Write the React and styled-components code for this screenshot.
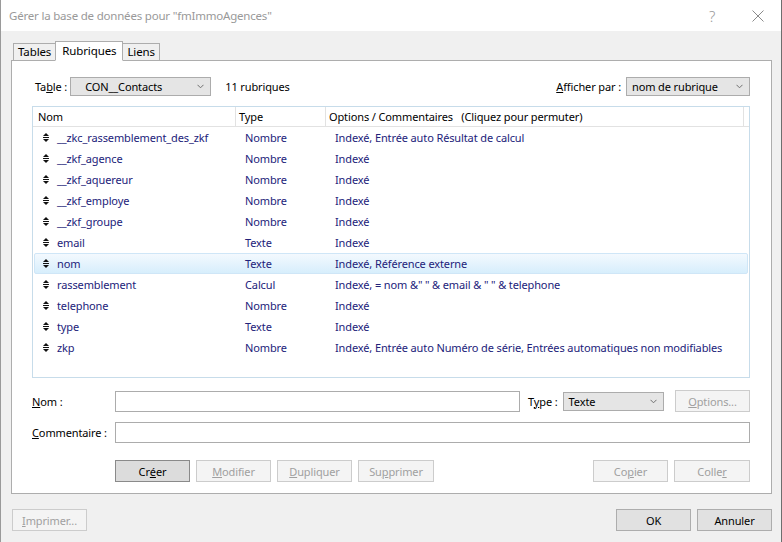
import React from "react";
import styled, { createGlobalStyle, css } from "styled-components";

const Global = createGlobalStyle`
  html, body { margin: 0; padding: 0; background: #f0f0f0; }
  body { font-family: "Noto Sans", "Open Sans", sans-serif; font-size: 11px; letter-spacing: -0.12px; color: #000; }
  * { box-sizing: border-box; }
`;

const Window = styled.div`
  width: 782px;
  height: 542px;
  display: flex;
  flex-direction: column;
  background: #f0f0f0;
  border-left: 1px solid #9a9a9a;
  border-right: 1px solid #6e6e6e;
  overflow: hidden;
`;

const TitleBar = styled.div`
  height: 31px;
  flex: none;
  background: #fff;
  display: flex;
  align-items: center;
  padding-left: 8px;
  color: #999;
  font-size: 11.5px;
  letter-spacing: -0.2px;
`;

const TitleText = styled.div`
  flex: 1;
`;

const TitleBtn = styled.div`
  width: 46px;
  display: flex;
  justify-content: center;
  align-items: center;
  color: #9a9a9a;
  font-size: 15px;
  font-weight: 300;
`;

const Body = styled.div`
  flex: 1;
  display: flex;
  flex-direction: column;
  padding: 10px 9px 0 10px;
`;

const TabStrip = styled.div`
  display: flex;
  align-items: flex-end;
  height: 19px;
  padding-left: 2px;
  position: relative;
  z-index: 1;
`;

const Tab = styled.div`
  height: ${(p) => (p.$active ? 20 : 17)}px;
  padding: 0 ${(p) => (p.$active ? 6 : 4)}px;
  margin: 0 ${(p) => (p.$active ? -1 : 0)}px;
  border: 1px solid #adadad;
  border-bottom: ${(p) => (p.$active ? "1px solid #fff" : "none")};
  background: ${(p) => (p.$active ? "#fff" : "#f0f0f0")};
  display: flex;
  align-items: center;
  font-size: 11.5px;
  line-height: 1;
  margin-bottom: ${(p) => (p.$active ? -1 : 0)}px;
  z-index: ${(p) => (p.$active ? 2 : 1)};
`;

const Panel = styled.div`
  height: 434px;
  background: #fff;
  border: 1px solid #adadad;
  padding: 16px 21px 0 20px;
  display: flex;
  flex-direction: column;
`;

const TopRow = styled.div`
  display: flex;
  align-items: center;
  height: 19px;
  padding-left: 3px;
  margin-bottom: 10px;
`;

const Label = styled.span`
  white-space: nowrap;
  margin-right: ${(p) => p.$mr || 0}px;
  margin-left: ${(p) => p.$ml || 0}px;
`;

const Select = styled.div`
  width: ${(p) => p.$w}px;
  height: ${(p) => p.$h || 19}px;
  border: 1px solid #acacac;
  background: #e5e5e5;
  display: flex;
  align-items: center;
  padding-left: ${(p) => p.$pl || 5}px;
  padding-right: 6px;
  justify-content: space-between;
  flex: none;
`;

const Chevron = () => (
  <svg width="7" height="5" viewBox="0 0 7 5">
    <path d="M0.5 0.8 L3.5 3.8 L6.5 0.8" fill="none" stroke="#707070" strokeWidth="1" />
  </svg>
);

const CloseIcon = () => (
  <svg width="12" height="12" viewBox="0 0 12 12">
    <path d="M0.5 0.5 L11.5 11.5 M11.5 0.5 L0.5 11.5" fill="none" stroke="#8a8a8a" strokeWidth="1" />
  </svg>
);

const Count = styled.span`
  margin-left: 14px;
  flex: 1;
`;

const ListBox = styled.div`
  height: 272px;
  border: 1px solid #c7dcea;
  display: flex;
  flex-direction: column;
`;

const HeaderRow = styled.div`
  display: grid;
  grid-template-columns: 203px 90px 418px 1fr;
  height: 20px;
  flex: none;
  border-bottom: 1px solid #e2e2e2;
`;

const HeaderCell = styled.div`
  padding-left: ${(p) => p.$pl ?? 3}px;
  display: flex;
  align-items: center;
  border-right: 1px solid #e2e2e2;
  &:last-child { border-right: none; }
  white-space: pre;
`;

const Row = styled.div`
  display: grid;
  grid-template-columns: 203px 90px 1fr;
  height: 21px;
  flex: none;
  align-items: center;
  color: #22227a;
  margin: 0 1px;
  border: 1px solid transparent;
  border-radius: 2px;
  ${(p) =>
    p.$sel &&
    css`
      background: linear-gradient(#f3f9fe, #d7eefc);
      border-color: #cfe6f7;
    `}
`;

const NameCell = styled.div`
  display: flex;
  align-items: center;
  padding-left: 8px;
  white-space: nowrap;
`;

const Handle = styled.span`
  width: 14px;
  display: inline-flex;
`;

const Cell = styled.div`
  padding-left: ${(p) => p.$pl}px;
  white-space: nowrap;
`;

const FormRow = styled.div`
  display: flex;
  align-items: center;
  margin-top: ${(p) => p.$mt}px;
`;

const FormLabel = styled.div`
  width: 83px;
  flex: none;
  white-space: nowrap;
`;

const Input = styled.div`
  width: ${(p) => (p.$w ? `${p.$w}px` : "auto")};
  flex: ${(p) => (p.$w ? "none" : 1)};
  height: 21px;
  border: 1px solid #acacac;
  background: #fff;
`;

const Button = styled.div`
  width: ${(p) => p.$w || 75}px;
  height: 22px;
  display: flex;
  align-items: center;
  justify-content: center;
  flex: none;
  border: 1px solid ${(p) => (p.$disabled ? "#cccccc" : p.$active ? "#8a8a8a" : "#adadad")};
  background: ${(p) => (p.$disabled ? "#f4f4f4" : p.$active ? "#dcdcdc" : "#e1e1e1")};
  color: ${(p) => (p.$disabled ? "#a0a0a0" : "#000")};
  white-space: nowrap;
`;

const ButtonRow = styled.div`
  display: flex;
  gap: 6px;
  margin-top: 17px;
  padding-left: 83px;
`;

const Spacer = styled.div`
  flex: 1;
`;

const Footer = styled.div`
  display: flex;
  align-items: center;
  gap: 6px;
  padding-top: 15px;
  padding-left: 1px;
`;

const HandleIcon = () => (
  <svg width="6" height="9" viewBox="0 0 6 9">
    <path d="M3 0 L6 3 L0 3 Z" fill="#111" />
    <rect x="0" y="4" width="6" height="1" fill="#111" />
    <path d="M0 6 L6 6 L3 9 Z" fill="#111" />
  </svg>
);

const rows = [
  ["__zkc_rassemblement_des_zkf", "Nombre", "Indexé, Entrée auto Résultat de calcul"],
  ["__zkf_agence", "Nombre", "Indexé"],
  ["__zkf_aquereur", "Nombre", "Indexé"],
  ["__zkf_employe", "Nombre", "Indexé"],
  ["__zkf_groupe", "Nombre", "Indexé"],
  ["email", "Texte", "Indexé"],
  ["nom", "Texte", "Indexé, Référence externe"],
  ["rassemblement", "Calcul", "Indexé, = nom &\" \" & email & \" \" & telephone"],
  ["telephone", "Nombre", "Indexé"],
  ["type", "Texte", "Indexé"],
  ["zkp", "Nombre", "Indexé, Entrée auto Numéro de série, Entrées automatiques non modifiables"],
];

export default function App() {
  return (
    <>
      <Global />
      <Window>
        <TitleBar>
          <TitleText>Gérer la base de données pour "fmImmoAgences"</TitleText>
          <TitleBtn>?</TitleBtn>
          <TitleBtn><CloseIcon /></TitleBtn>
        </TitleBar>
        <Body>
          <TabStrip>
            <Tab>Tables</Tab>
            <Tab $active>Rubriques</Tab>
            <Tab>Liens</Tab>
          </TabStrip>
          <Panel>
            <TopRow>
              <Label $mr={3}>Ta<u>b</u>le :</Label>
              <Select $w={141} $pl={14}>
                <span>CON__Contacts</span>
                <Chevron />
              </Select>
              <Count>11 rubriques</Count>
              <Label $mr={5}><u>A</u>fficher par :</Label>
              <Select $w={124}>
                <span>nom de rubrique</span>
                <Chevron />
              </Select>
            </TopRow>
            <ListBox>
              <HeaderRow>
                <HeaderCell $pl={5}>Nom</HeaderCell>
                <HeaderCell>Type</HeaderCell>
                <HeaderCell>{"Options / Commentaires   (Cliquez pour permuter)"}</HeaderCell>
                <HeaderCell />
              </HeaderRow>
              {rows.map(([n, t, o]) => (
                <Row key={n} $sel={n === "nom"}>
                  <NameCell>
                    <Handle><HandleIcon /></Handle>
                    {n}
                  </NameCell>
                  <Cell $pl={7}>{t}</Cell>
                  <Cell $pl={7}>{o}</Cell>
                </Row>
              ))}
            </ListBox>
            <FormRow $mt={12}>
              <FormLabel><u>N</u>om :</FormLabel>
              <Input $w={405} />
              <Label $ml={8} $mr={5}>T<u>y</u>pe :</Label>
              <Select $w={101}>
                <span>Texte</span>
                <Chevron />
              </Select>
              <Spacer />
              <Button $w={75} $disabled><u>O</u>ptions...</Button>
            </FormRow>
            <FormRow $mt={10}>
              <FormLabel><u>C</u>ommentaire :</FormLabel>
              <Input />
            </FormRow>
            <ButtonRow>
              <Button $active>Cr<u>é</u>er</Button>
              <Button $disabled><u>M</u>odifier</Button>
              <Button $disabled><u>D</u>upliquer</Button>
              <Button $disabled $w={76}>Su<u>p</u>primer</Button>
              <Spacer />
              <Button $disabled>Co<u>p</u>ier</Button>
              <Button $disabled $w={76}>Colle<u>r</u></Button>
            </ButtonRow>
          </Panel>
          <Footer>
            <Button $disabled><u>I</u>mprimer...</Button>
            <Spacer />
            <Button>OK</Button>
            <Button>Annuler</Button>
          </Footer>
        </Body>
      </Window>
    </>
  );
}
